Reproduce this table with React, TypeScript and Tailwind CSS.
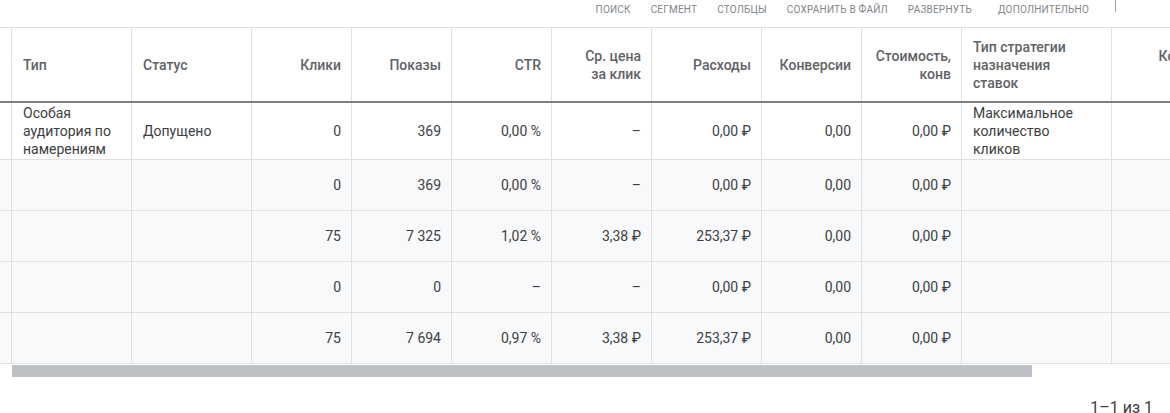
import type { ReactNode } from "react"

type Col = { w: string; align: "left" | "right"; head: ReactNode }

const cols: Col[] = [
  { w: "w-[12px]", align: "left", head: "" },
  { w: "w-[120px]", align: "left", head: "Тип" },
  { w: "w-[120px]", align: "left", head: "Статус" },
  { w: "w-[100px]", align: "right", head: "Клики" },
  { w: "w-[100px]", align: "right", head: "Показы" },
  { w: "w-[100px]", align: "right", head: "CTR" },
  { w: "w-[100px]", align: "right", head: <>Ср. цена<br />за клик</> },
  { w: "w-[110px]", align: "right", head: "Расходы" },
  { w: "w-[100px]", align: "right", head: "Конверсии" },
  { w: "w-[100px]", align: "right", head: <>Стоимость,<br />конв</> },
  { w: "w-[150px]", align: "left", head: <>Тип стратегии<br />назначения<br />ставок</> },
  { w: "w-[149px]", align: "right", head: <>Коэффициент<br />конверсии</> },
]

const rows: ReactNode[][] = [
  ["", <>Особая<br />аудитория по<br />намерениям</>, "Допущено", "0", "369", "0,00 %", "–", "0,00 ₽", "0,00", "0,00 ₽", <>Максимальное<br />количество<br />кликов</>, ""],
  ["", "", "", "0", "369", "0,00 %", "–", "0,00 ₽", "0,00", "0,00 ₽", "", ""],
  ["", "", "", "75", "7 325", "1,02 %", "3,38 ₽", "253,37 ₽", "0,00", "0,00 ₽", "", ""],
  ["", "", "", "0", "0", "–", "–", "0,00 ₽", "0,00", "0,00 ₽", "", ""],
  ["", "", "", "75", "7 694", "0,97 %", "3,38 ₽", "253,37 ₽", "0,00", "0,00 ₽", "", ""],
]

const tools = ["Поиск", "Сегмент", "Столбцы", "Сохранить в файл", "Развернуть"]

export default function App() {
  return (
    <div className="w-[1170px] h-[413px] overflow-hidden bg-white font-['Roboto',sans-serif] text-[#3c4043]">
      {/* toolbar */}
      <div className="h-[27px] flex justify-end items-start pr-[54px]">
        <div className="flex gap-[20px] pt-[4px] text-[10px] leading-[12px] uppercase tracking-[0.2px] text-[#80868b]">
          {tools.map((t) => (
            <span key={t}>{t}</span>
          ))}
          <span className="ml-[6px]">Дополнительно</span>
        </div>
        <div className="ml-[26px] w-px h-[12px] bg-[#9aa0a6]" />
      </div>

      {/* table */}
      <div className="w-[1170px] overflow-hidden">
        <div className="w-[1261px]">
          <div className="flex h-[76px] border-t border-[#e0e0e0] border-b-2 border-b-[#7d7f82] bg-white">
            {cols.map((c, i) => (
              <div
                key={i}
                className={`${c.w} shrink-0 border-r border-[#e0e0e0] flex items-center text-[14px] leading-[18px] font-medium text-[#5f6368] ${
                  c.align === "right" ? "justify-end text-right pr-[10px]" : "pl-[11px]"
                }`}
              >
                <div>{c.head}</div>
              </div>
            ))}
          </div>

          {rows.map((r, ri) => (
            <div
              key={ri}
              className={`flex border-b border-[#e0e0e0] ${ri === 0 ? "h-[57px] bg-white" : "h-[51px] bg-[#f8f9fa]"}`}
            >
              {r.map((v, ci) => (
                <div
                  key={ci}
                  className={`${cols[ci].w} shrink-0 border-r border-[#e0e0e0] flex items-center text-[14px] leading-[18px] whitespace-nowrap ${
                    cols[ci].align === "right" ? "justify-end text-right pr-[10px]" : "pl-[11px]"
                  }`}
                >
                  <div>{v}</div>
                </div>
              ))}
            </div>
          ))}
        </div>
      </div>

      {/* horizontal scrollbar */}
      <div className="mt-px ml-[12px] w-[1020px] h-[12px] bg-[#bdc1c6]" />

      {/* pagination */}
      <div className="mt-[21px] flex justify-end pr-[17px] text-[16px] leading-[20px] text-[#3c4043]">
        1–1 из 1
      </div>
    </div>
  )
}
